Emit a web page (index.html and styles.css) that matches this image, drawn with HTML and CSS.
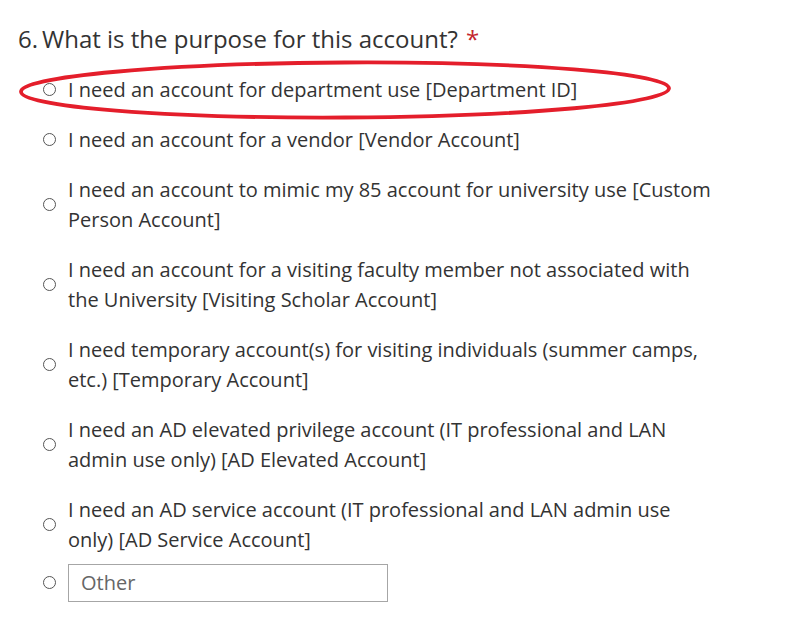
FILE: index.html
```html
<!DOCTYPE html>
<html>
<head>
<meta charset="utf-8">
<link rel="stylesheet" href="styles.css">
</head>
<body>
<div class="question">
  <div class="title"><span class="num">6.</span><span class="qtext">What is the purpose for this account?</span><span class="req">*</span></div>
  <div class="options">
    <div class="option highlighted">
      <span class="radio"></span>
      <span class="label">I need an account for department use [Department ID]</span>
      <svg class="ring" viewBox="0 0 660 64" width="660" height="64"><ellipse cx="330" cy="31" rx="324" ry="27.5" fill="none" stroke="#e41e2b" stroke-width="3.8" transform="rotate(-0.3 330 31)"/></svg>
    </div>
    <div class="option"><span class="radio"></span><span class="label">I need an account for a vendor [Vendor Account]</span></div>
    <div class="option"><span class="radio"></span><span class="label">I need an account to mimic my 85 account for university use [Custom Person Account]</span></div>
    <div class="option"><span class="radio"></span><span class="label">I need an account for a visiting faculty member not associated with the University [Visiting Scholar Account]</span></div>
    <div class="option"><span class="radio"></span><span class="label">I need temporary account(s) for visiting individuals (summer camps, etc.) [Temporary Account]</span></div>
    <div class="option"><span class="radio"></span><span class="label">I need an AD elevated privilege account (IT professional and LAN admin use only) [AD Elevated Account]</span></div>
    <div class="option"><span class="radio"></span><span class="label">I need an AD service account (IT professional and LAN admin use only) [AD Service Account]</span></div>
    <div class="option other-row"><span class="radio"></span><div class="other">Other</div></div>
  </div>
</div>
</body>
</html>
```
FILE: styles.css
```css
html, body {
  margin: 0;
  padding: 0;
  background: #ffffff;
}
body {
  font-family: "Open Sans", "Noto Sans", sans-serif;
  color: #333333;
  width: 790px;
  height: 618px;
  overflow: hidden;
}
.question {
  padding: 22px 0 0 18px;
}
.title {
  display: flex;
  align-items: baseline;
  font-size: 24px;
  line-height: 34px;
  color: #333333;
}
.num {
  width: 24px;
}
.req {
  color: #c4262e;
  margin-left: 8px;
}
.options {
  display: flex;
  flex-direction: column;
  gap: 20px;
  margin-top: 19px;
  padding-left: 25px;
}
.option {
  position: relative;
  display: flex;
  align-items: center;
  gap: 12px;
}
.radio {
  flex: none;
  width: 11px;
  height: 11px;
  border: 1px solid #555555;
  border-radius: 50%;
  margin-bottom: 2px;
}
.label {
  font-size: 20px;
  line-height: 30px;
  width: 646px;
}
.ring {
  position: absolute;
  left: -28px;
  top: -16px;
}
.other-row {
  margin-top: -11px;
}
.other {
  width: 306px;
  height: 36px;
  border: 1px solid #a6a6a6;
  font-size: 20px;
  line-height: 36px;
  padding-left: 12px;
  color: #666666;
}
```
